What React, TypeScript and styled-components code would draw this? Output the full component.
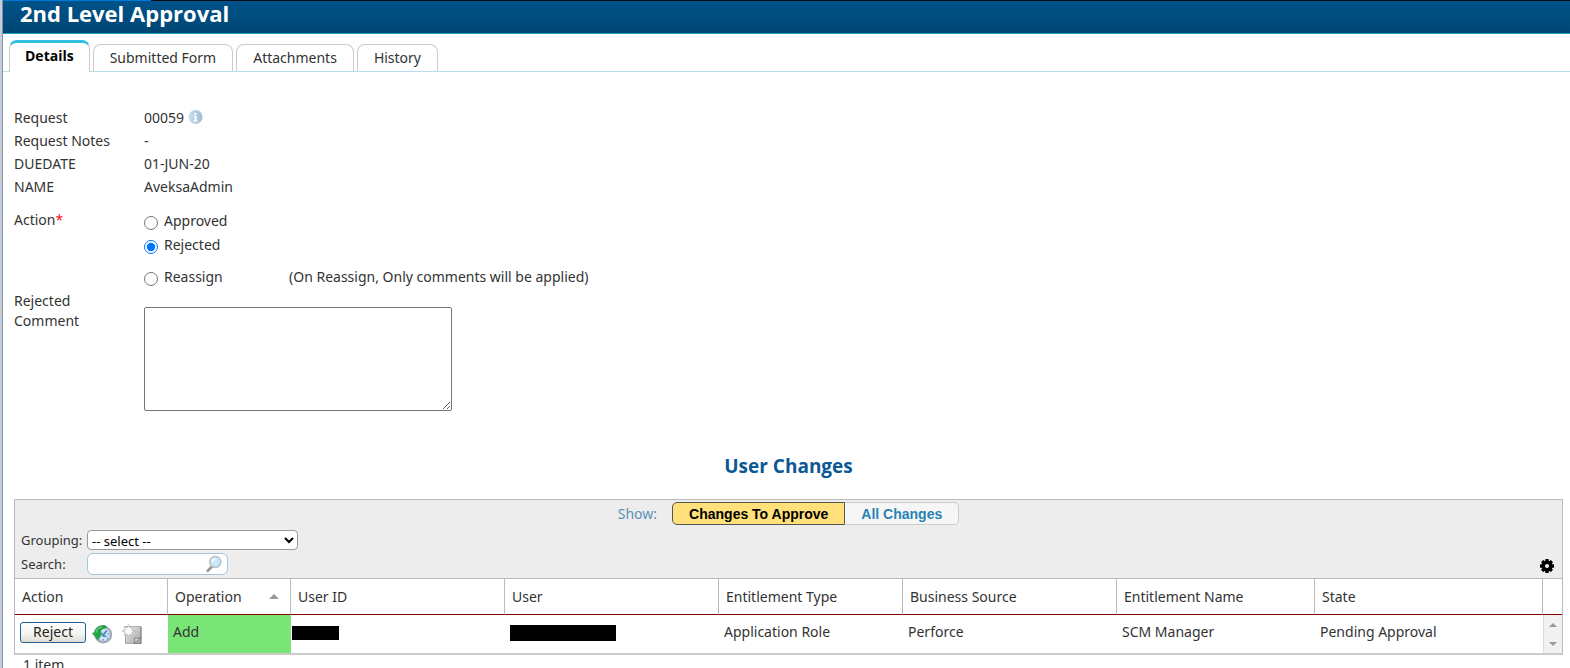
import React from "react";
import styled, { createGlobalStyle, css } from "styled-components";

const GlobalStyle = createGlobalStyle`
  *, *::before, *::after { box-sizing: border-box; }
  body {
    margin: 0;
    background: #fff;
    color: #333;
    font: 14px/20px "Noto Sans", "Open Sans", sans-serif;
  }
`;

const Page = styled.div`
  height: 100vh;
  overflow: hidden;
  border-left: 2px solid #c3cfe0;
`;

const Frame = styled.div`
  height: 100%;
  border-left: 1px solid #8c8f96;
`;

const Progress = styled.div`
  height: 1px;
  background: linear-gradient(90deg, #0078d7 148px, #0a0d14 148px);
`;

const Header = styled.header`
  display: flex;
  align-items: center;
  height: 33px;
  padding: 0 17px 8px;
  background: linear-gradient(#005288, #004a7a 70%, #004573);
  border-bottom: 1px solid #1f9fc0;
`;

const Title = styled.h1`
  margin: 0;
  color: #fff;
  font-family: "Open Sans", sans-serif;
  font-size: 22px;
  line-height: 24px;
  font-weight: 700;
`;

const Tabs = styled.nav`
  display: flex;
  align-items: flex-end;
  gap: 3px;
  height: 38px;
  padding-left: 6px;
  border-bottom: 1px solid #b9dcef;
`;

const Tab = styled.a<{ $active?: boolean }>`
  height: 27px;
  padding: 3px 16px 0;
  border: 1px solid #ccc;
  border-bottom: 0;
  border-radius: 8px 8px 0 0;
  color: #333;
  text-decoration: none;
  ${(p) =>
    p.$active &&
    css`
      height: 32px;
      margin-bottom: -1px;
      padding: 3px 15px 0;
      border-top: 3px solid #2fbfe3;
      background: #fff;
      color: #000;
      font-family: "Open Sans", sans-serif;
      font-weight: 700;
    `}
`;

const Form = styled.form`
  display: grid;
  grid-template-columns: 130px 1fr;
  padding: 35px 0 0 11px;
`;

const Facts = styled.dl`
  display: grid;
  grid-column: 1 / -1;
  grid-template-columns: subgrid;
  grid-auto-rows: 20px;
  row-gap: 3px;
  margin: 0 0 13px;
  padding-top: 1px;
`;

const Term = styled.dt`
  margin: 0;
`;

const Value = styled.dd`
  display: flex;
  gap: 4px;
  margin: 0;
`;

const Required = styled.span`
  color: #f00;
  font-family: "Open Sans", sans-serif;
`;

const Options = styled.div`
  display: grid;
  grid-template-columns: 145px 1fr;
  padding: 1px 0 4px;
`;

const Option = styled.label<{ $gap?: number }>`
  display: flex;
  gap: 6px;
  grid-column: 1;
  margin-bottom: ${(p) => p.$gap ?? 0}px;
`;

const Radio = styled.input`
  width: 14px;
  height: 14px;
  margin: 5px 0 0;
  accent-color: #0075ff;
`;

const CommentLabel = styled.label`
  width: 80px;
`;

const Comment = styled.textarea`
  display: block;
  width: 308px;
  height: 104px;
  margin-top: 16px;
  border: 1px solid #767676;
  border-radius: 2px;
  background: #fff;
  resize: both;
`;

const Changes = styled.section`
  padding: 40px 7px 0 11px;
`;

const SectionTitle = styled.h2`
  margin: 0 0 18px;
  color: #0b5896;
  font-family: "Open Sans", sans-serif;
  font-size: 19px;
  line-height: 30px;
  font-weight: 700;
  text-align: center;
`;

const Panel = styled.div`
  border: 1px solid #bbb;
  border-bottom: 2px solid #ccc;
`;

const Toolbar = styled.div`
  display: flex;
  flex-direction: column;
  padding: 2px 6px;
  background: #ededed;
  border-bottom: 1px solid #bbb;
`;

const ShowBar = styled.div`
  display: flex;
  align-items: center;
  justify-content: center;
  gap: 15px;
  margin-bottom: 3px;
  color: #5b92b4;
`;

const Segments = styled.div`
  display: flex;
`;

const Segment = styled.button<{ $active?: boolean }>`
  height: 23px;
  padding: 0 16px;
  border: 1px solid #ccc;
  border-left: 0;
  border-radius: 0 5px 5px 0;
  background: #f6f6f6;
  color: #2684b4;
  font: 700 14px/20px "Liberation Sans", Arial, sans-serif;
  ${(p) =>
    p.$active &&
    css`
      border: 1px solid #555;
      border-radius: 5px 0 0 5px;
      background: #ffe07a;
      color: #000;
    `}
`;

const Field = styled.div`
  display: grid;
  grid-template-columns: 66px auto 1fr auto;
  align-items: center;
  height: 24px;
  font-size: 13px;
`;

const Select = styled.select`
  width: 211px;
  height: 20px;
  padding: 0;
  border: 1px solid #999;
  border-radius: 4px;
  background: #fff;
  color: #000;
  font: 13px/18px "Noto Sans", sans-serif;
`;

const SearchBox = styled.div`
  display: flex;
  align-items: center;
  width: 141px;
  height: 22px;
  padding: 0 5px;
  border: 1px solid #a5c7dc;
  border-radius: 6px;
  background: #fff;
`;

const SearchInput = styled.input`
  flex: 1;
  min-width: 0;
  border: 0;
  outline: 0;
  background: transparent;
  font: inherit;
`;

const IconButton = styled.button`
  display: flex;
  padding: 0;
  border: 0;
  background: none;
`;

const Gear = styled(IconButton)`
  grid-column: 4;
  padding: 4px 1px 0 0;
`;

const Table = styled.table`
  width: 100%;
  table-layout: fixed;
  border-collapse: separate;
  border-spacing: 0;
`;

const Th = styled.th`
  height: 36px;
  padding: 0 7px;
  border-right: 1px solid #bbb;
  border-bottom: 1px solid #800000;
  font-weight: 400;
  text-align: left;
  &:last-child { border-right: 0; }
`;

const Sortable = styled.div`
  display: flex;
  align-items: center;
  justify-content: space-between;
  padding-right: 4px;
`;

const Td = styled.td<{ $fill?: string }>`
  height: 38px;
  padding: 0 5px 4px;
  background: ${(p) => p.$fill ?? "#fff"};
`;

const RedactedCell = styled(Td)<{ $inset?: number }>`
  padding: 0 0 2px ${(p) => p.$inset ?? 1}px;
`;

const Redacted = styled.div<{ $width: number; $height: number }>`
  width: ${(p) => p.$width}px;
  height: ${(p) => p.$height}px;
  background: #000;
`;

const Actions = styled.div`
  display: flex;
  align-items: center;
  gap: 6px;
`;

const RejectButton = styled.button`
  width: 66px;
  height: 21px;
  padding: 0;
  border: 1px solid #1f5f95;
  border-radius: 3px;
  background: linear-gradient(#fff, #f3f3ee 60%, #e0ded4);
  color: #222;
  font: 14px/18px "Noto Sans", sans-serif;
`;

const RowIcons = styled.div`
  display: flex;
  gap: 10px;
  padding-top: 4px;
`;

const Rail = styled.td`
  padding: 0;
  background: #f1f1f1;
  border-left: 1px solid #ddd;
`;

const RailButton = styled(IconButton)`
  align-items: center;
  justify-content: center;
  width: 100%;
  height: 19px;
`;

const Count = styled.div`
  padding: 0 9px;
`;

const InfoIcon = () => (
  <svg width="15" height="20" viewBox="0 0 15 20" aria-label="Info">
    <defs>
      <linearGradient id="info" x1="0" x2="1">
        <stop offset="0" stopColor="#cfe0ec" />
        <stop offset="1" stopColor="#9dbcd3" />
      </linearGradient>
    </defs>
    <circle cx="7.5" cy="9" r="7" fill="url(#info)" />
    <path d="M6.5 5h2v2h-2zM5.8 8h2.8v4.4h1v1H5.6v-1h1V9h-.8z" fill="#fff" />
  </svg>
);

const SearchIcon = () => (
  <svg width="16" height="18" viewBox="0 0 16 18">
    <path d="M6 11.5 1.8 15.8" stroke="#999" strokeWidth="2.8" strokeLinecap="round" />
    <circle cx="9.3" cy="7" r="5.500" fill="#cfe8f9" stroke="#b3c2cc" strokeWidth="1.5" />
    <path d="M6.3 7a3 3 0 0 1 3-3" fill="none" stroke="#fff" strokeWidth="1.5" />
  </svg>
);

const GearIcon = () => (
  <svg width="16" height="16" viewBox="0 0 16 16">
    <g fill="#000">
      <circle cx="8" cy="8" r="5.5" />
      {[0, 45, 90, 135].map((a) => (
        <rect key={a} x="6.3" y="1" width="3.4" height="14" rx=".5" transform={`rotate(${a} 8 8)`} />
      ))}
    </g>
    <circle cx="8" cy="8" r="2.1" fill="#ededed" />
  </svg>
);

const HistoryIcon = () => (
  <svg width="20" height="20" viewBox="0 0 20 20">
    <circle cx="11.2" cy="10.5" r="8" fill="#b9cde2" stroke="#a3a6b5" strokeWidth="1.8" />
    <circle cx="11.2" cy="10.5" r="6" fill="#cfe5f8" />
    <path d="M10.500 12 14.8 6.500M10.500 12l4 .3" stroke="#3b7fc0" strokeWidth="1.6" fill="none" />
    <path d="M14.8 14.2l1.4 1M11.2 15v1.500M17 10h-1.500" stroke="#5c7696" strokeWidth="1" />
    <path d="M14 2C8.500.4 3 3.200 2.400 9H.3l5.700 6.800L10.500 9H8.200c.2-3 2.600-5 5.800-5z" fill="#1fa845" stroke="#2f8f4c" strokeWidth=".7" />
    <path d="M4 8.500c.5-3 2.600-5 5.600-5.500" stroke="#8fe0a0" fill="none" />
  </svg>
);

const NewFormIcon = () => (
  <svg width="20" height="20" viewBox="0 0 20 20">
    <defs>
      <linearGradient id="sheet" x1="0" x2="1" y1="0" y2="1">
        <stop offset="0" stopColor="#eee" />
        <stop offset="1" stopColor="#a0a0a0" />
      </linearGradient>
    </defs>
    <path d="M3.500 2.500h15.500v17H3.500z" fill="url(#sheet)" stroke="#aaa" />
    <path d="M19 3v16.500H12" fill="none" stroke="#808080" />
    <path d="M12 19.500c1-2 1-4 .5-5.500 2 .7 4.500.5 6.500-.5z" fill="#ddd" stroke="#777" strokeWidth=".8" />
    <path d="m6.500.5 1.200 3.300L11 2.600 9.700 5.800 13 7 9.700 8.200 11 11.400 7.700 10.200 6.500 13.500 5.300 10.200 2 11.400 3.300 8.200 0 7l3.300-1.200L2 2.600l3.300 1.200z" fill="#fafafa" stroke="#b8b8b8" strokeWidth=".8" />
  </svg>
);

const Arrow = ({ down, size = 8 }: { down?: boolean; size?: number }) => (
  <svg width={size} height={size / 2} viewBox="0 0 8 4">
    <path d={down ? "M0 0h8L4 4z" : "M0 4h8L4 0z"} fill="#999" />
  </svg>
);

const facts = [
  { term: "Request", value: "00059", info: true },
  { term: "Request Notes", value: "-" },
  { term: "DUEDATE", value: "01-JUN-20" },
  { term: "NAME", value: "AveksaAdmin" },
];

const tabs = ["Details", "Submitted Form", "Attachments", "History"];

export default function App() {
  return (
    <Page>
      <GlobalStyle />
      <Frame>
        <Progress />
        <Header>
          <Title>2nd Level Approval</Title>
        </Header>
        <Tabs>
          {tabs.map((name, i) => (
            <Tab key={name} href="#" $active={i === 0}>
              {name}
            </Tab>
          ))}
        </Tabs>

        <Form>
          <Facts>
            {facts.map((f) => (
              <React.Fragment key={f.term}>
                <Term>{f.term}</Term>
                <Value>
                  {f.value}
                  {f.info && <InfoIcon />}
                </Value>
              </React.Fragment>
            ))}
          </Facts>
          <div id="action-label">
            Action<Required>*</Required>
          </div>
          <Options role="radiogroup" aria-labelledby="action-label">
            <Option $gap={4}>
              <Radio type="radio" name="action" />
              Approved
            </Option>
            <Option $gap={12}>
              <Radio type="radio" name="action" defaultChecked />
              Rejected
            </Option>
            <Option>
              <Radio type="radio" name="action" />
              Reassign
            </Option>
            <span>(On Reassign, Only comments will be applied)</span>
          </Options>
          <CommentLabel htmlFor="comment">Rejected Comment</CommentLabel>
          <Comment id="comment" />
        </Form>

        <Changes>
          <SectionTitle>User Changes</SectionTitle>
          <Panel>
            <Toolbar>
              <ShowBar>
                <span>Show:</span>
                <Segments>
                  <Segment type="button" $active>
                    Changes To Approve
                  </Segment>
                  <Segment type="button">All Changes</Segment>
                </Segments>
              </ShowBar>
              <Field>
                <label htmlFor="grouping">Grouping:</label>
                <Select id="grouping">
                  <option>-- select --</option>
                </Select>
              </Field>
              <Field>
                <label htmlFor="search">Search:</label>
                <SearchBox>
                  <SearchInput id="search" type="text" />
                  <IconButton type="button" aria-label="Search">
                    <SearchIcon />
                  </IconButton>
                </SearchBox>
                <Gear type="button" aria-label="Table options">
                  <GearIcon />
                </Gear>
              </Field>
            </Toolbar>
            <Table>
              <colgroup>
                <col width="153" />
                <col width="123" />
                <col width="214" />
                <col width="214" />
                <col width="184" />
                <col width="214" />
                <col width="198" />
                <col />
                <col width="19" />
              </colgroup>
              <thead>
                <tr>
                  <Th>Action</Th>
                  <Th>
                    <Sortable>
                      Operation
                      <Arrow size={10} />
                    </Sortable>
                  </Th>
                  <Th>User ID</Th>
                  <Th>User</Th>
                  <Th>Entitlement Type</Th>
                  <Th>Business Source</Th>
                  <Th>Entitlement Name</Th>
                  <Th>State</Th>
                  <Th />
                </tr>
              </thead>
              <tbody>
                <tr>
                  <Td>
                    <Actions>
                      <RejectButton type="button">Reject</RejectButton>
                      <RowIcons>
                        <IconButton type="button" aria-label="History">
                          <HistoryIcon />
                        </IconButton>
                        <IconButton type="button" aria-label="New form">
                          <NewFormIcon />
                        </IconButton>
                      </RowIcons>
                    </Actions>
                  </Td>
                  <Td $fill="#7ae577">Add</Td>
                  <RedactedCell>
                    <Redacted $width={47} $height={14} />
                  </RedactedCell>
                  <RedactedCell $inset={5}>
                    <Redacted $width={106} $height={16} />
                  </RedactedCell>
                  <Td>Application Role</Td>
                  <Td>Perforce</Td>
                  <Td>SCM Manager</Td>
                  <Td>Pending Approval</Td>
                  <Rail>
                    <RailButton type="button" aria-label="Scroll up">
                      <Arrow />
                    </RailButton>
                    <RailButton type="button" aria-label="Scroll down">
                      <Arrow down />
                    </RailButton>
                  </Rail>
                </tr>
              </tbody>
            </Table>
          </Panel>
          <Count>1 item</Count>
        </Changes>
      </Frame>
    </Page>
  );
}
